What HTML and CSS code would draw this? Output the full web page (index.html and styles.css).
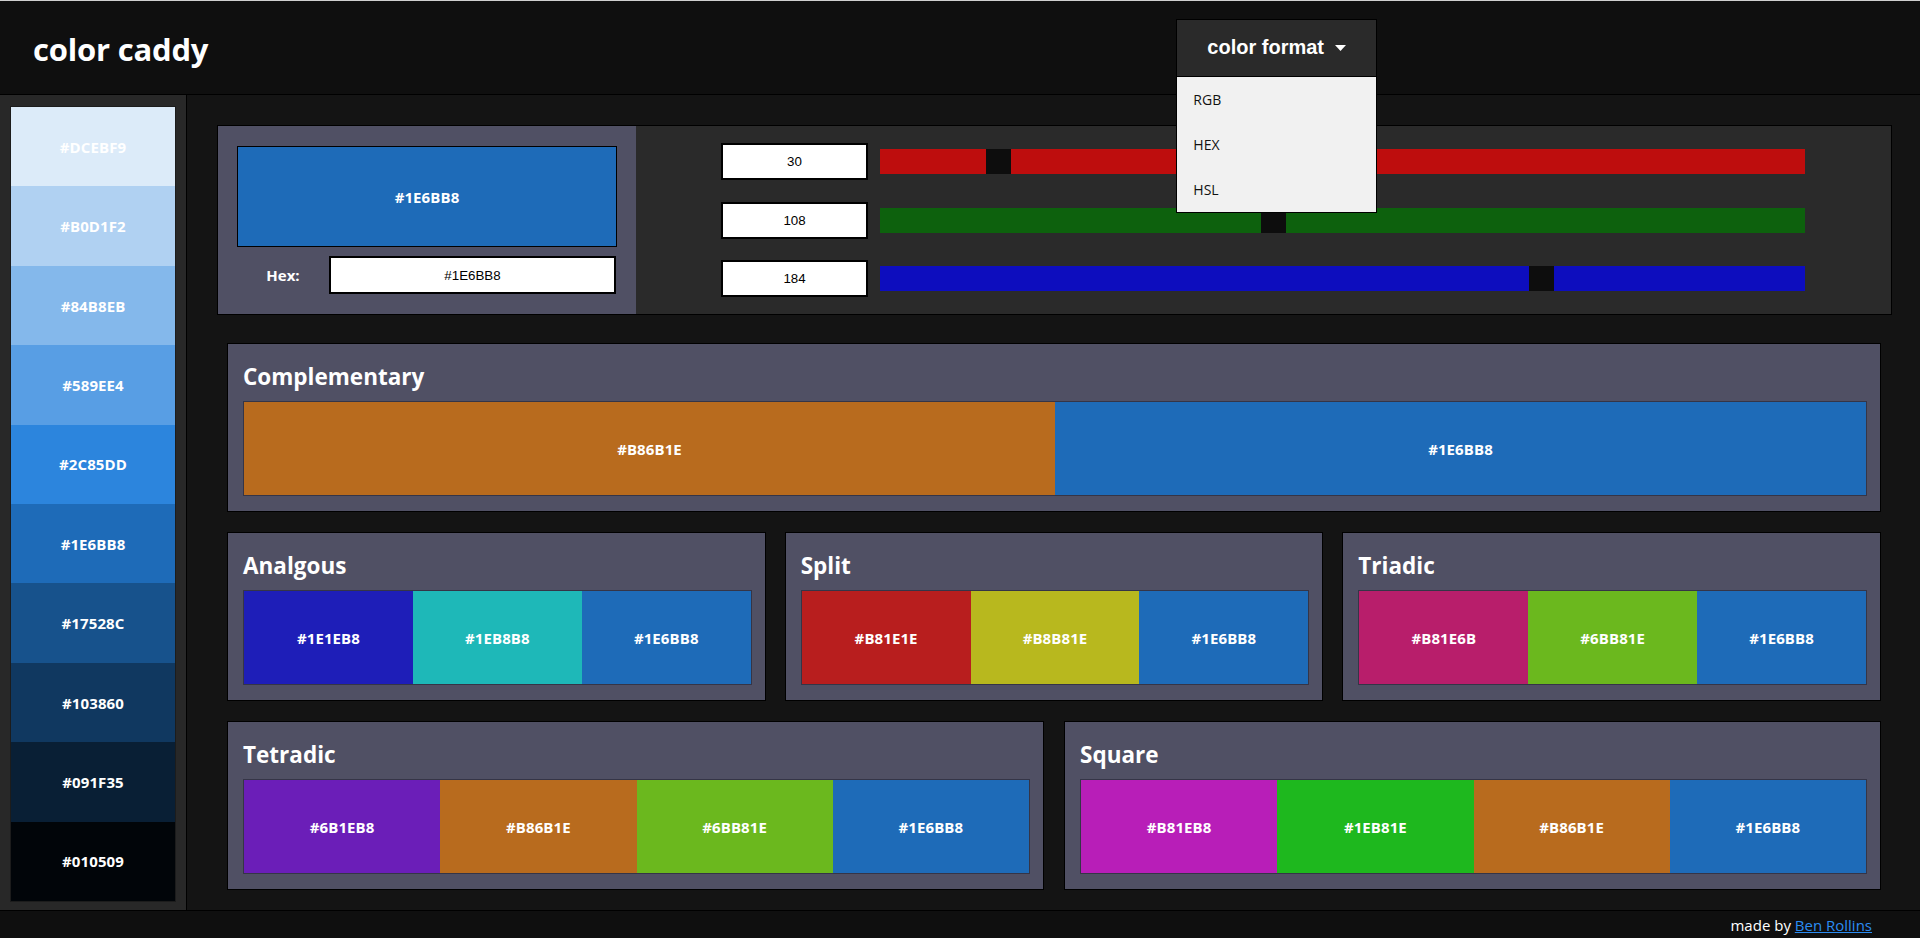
FILE: index.html
```html
<!DOCTYPE html>
<html lang="en">
<head>
<meta charset="utf-8">
<title>color caddy</title>
<link rel="stylesheet" href="styles.css">
</head>
<body>
<div class="app">
  <header class="header">
    <h1 class="logo">color caddy</h1>
    <div class="dropdown">
      <button class="dropdown-btn" type="button">color format
        <svg class="caret" width="11" height="6" viewBox="0 0 11 6"><polygon points="0,0 11,0 5.5,6" fill="#fff"/></svg>
      </button>
      <ul class="dropdown-menu">
        <li class="dropdown-item">RGB</li>
        <li class="dropdown-item">HEX</li>
        <li class="dropdown-item">HSL</li>
      </ul>
    </div>
  </header>

  <div class="body">
    <aside class="sidebar">
      <div class="shades">
        <div class="shade" style="background:#DCEBF9">#DCEBF9</div>
        <div class="shade" style="background:#B0D1F2">#B0D1F2</div>
        <div class="shade" style="background:#84B8EB">#84B8EB</div>
        <div class="shade" style="background:#589EE4">#589EE4</div>
        <div class="shade" style="background:#2C85DD">#2C85DD</div>
        <div class="shade" style="background:#1E6BB8">#1E6BB8</div>
        <div class="shade" style="background:#17528C">#17528C</div>
        <div class="shade" style="background:#103860">#103860</div>
        <div class="shade" style="background:#091F35">#091F35</div>
        <div class="shade" style="background:#010509">#010509</div>
      </div>
    </aside>

    <main class="main">
      <section class="picker">
        <div class="picker-preview">
          <div class="preview-swatch">#1E6BB8</div>
          <div class="hex-row">
            <label class="hex-label" for="hex">Hex:</label>
            <input class="hex-input" id="hex" type="text" value="#1E6BB8">
          </div>
        </div>
        <div class="picker-sliders">
          <div class="slider-row">
            <input class="num" type="text" value="30">
            <input class="range range-red" type="range" min="0" max="255" value="30">
          </div>
          <div class="slider-row">
            <input class="num" type="text" value="108">
            <input class="range range-green" type="range" min="0" max="255" value="108">
          </div>
          <div class="slider-row">
            <input class="num" type="text" value="184">
            <input class="range range-blue" type="range" min="0" max="255" value="184">
          </div>
        </div>
      </section>

      <div class="schemes">
        <section class="box box-comp">
          <h2 class="box-title">Complementary</h2>
          <div class="swatches">
            <div class="sw" style="background:#B86B1E">#B86B1E</div>
            <div class="sw" style="background:#1E6BB8">#1E6BB8</div>
          </div>
        </section>

        <div class="row row-three">
          <section class="box">
            <h2 class="box-title">Analgous</h2>
            <div class="swatches">
              <div class="sw" style="background:#1E1EB8">#1E1EB8</div>
              <div class="sw" style="background:#1EB8B8">#1EB8B8</div>
              <div class="sw" style="background:#1E6BB8">#1E6BB8</div>
            </div>
          </section>
          <section class="box">
            <h2 class="box-title">Split</h2>
            <div class="swatches">
              <div class="sw" style="background:#B81E1E">#B81E1E</div>
              <div class="sw" style="background:#B8B81E">#B8B81E</div>
              <div class="sw" style="background:#1E6BB8">#1E6BB8</div>
            </div>
          </section>
          <section class="box">
            <h2 class="box-title">Triadic</h2>
            <div class="swatches">
              <div class="sw" style="background:#B81E6B">#B81E6B</div>
              <div class="sw" style="background:#6BB81E">#6BB81E</div>
              <div class="sw" style="background:#1E6BB8">#1E6BB8</div>
            </div>
          </section>
        </div>

        <div class="row row-two">
          <section class="box">
            <h2 class="box-title">Tetradic</h2>
            <div class="swatches">
              <div class="sw" style="background:#6B1EB8">#6B1EB8</div>
              <div class="sw" style="background:#B86B1E">#B86B1E</div>
              <div class="sw" style="background:#6BB81E">#6BB81E</div>
              <div class="sw" style="background:#1E6BB8">#1E6BB8</div>
            </div>
          </section>
          <section class="box">
            <h2 class="box-title">Square</h2>
            <div class="swatches">
              <div class="sw" style="background:#B81EB8">#B81EB8</div>
              <div class="sw" style="background:#1EB81E">#1EB81E</div>
              <div class="sw" style="background:#B86B1E">#B86B1E</div>
              <div class="sw" style="background:#1E6BB8">#1E6BB8</div>
            </div>
          </section>
        </div>
      </div>
    </main>
  </div>

  <footer class="footer">
    <span>made by <a class="footer-link" href="#">Ben Rollins</a></span>
  </footer>
</div>
</body>
</html>
```

FILE: styles.css
```css
* {
  box-sizing: border-box;
}

html, body {
  margin: 0;
  padding: 0;
}

body {
  background: #141414;
  color: #fff;
  font-family: "Open Sans", "Noto Sans", sans-serif;
}

.app {
  display: flex;
  flex-direction: column;
  height: 100vh;
  overflow: hidden;
}

/* ---------- header ---------- */
.header {
  flex: none;
  height: 95px;
  display: flex;
  align-items: center;
  padding-left: 33px;
  background: #0f0f0f;
  border-top: 1px solid #cfcfcf;
  border-bottom: 1px solid #000;
  position: relative;
  z-index: 5;
}

.logo {
  margin: 0;
  padding-top: 3px;
  font-size: 31px;
  font-weight: 700;
  letter-spacing: -0.2px;
  color: #fff;
}

.dropdown {
  position: relative;
  margin-left: auto;
  margin-right: 543px;
}

.dropdown-btn {
  display: flex;
  align-items: center;
  gap: 11px;
  height: 58px;
  padding: 0 30px;
  margin: 0;
  white-space: nowrap;
  background: #2a2a2a;
  border: 1px solid #000;
  color: #fff;
  font-family: "Liberation Sans", Arial, sans-serif;
  font-size: 20px;
  font-weight: 700;
}

.caret {
  display: block;
  flex: none;
  margin-top: 1px;
}

.dropdown-menu {
  position: absolute;
  top: 100%;
  left: 0;
  right: 0;
  margin: 0;
  padding: 0;
  list-style: none;
  background: #f1f1f1;
  border: 1px solid #000;
  border-top: 0;
}

.dropdown-item {
  height: 45px;
  line-height: 46px;
  padding-left: 16px;
  color: #111;
  font-size: 14px;
}

/* ---------- body ---------- */
.body {
  flex: 1;
  display: flex;
  min-height: 0;
}

.sidebar {
  flex: none;
  width: 187px;
  display: flex;
  padding: 11px 10px 8px 10px;
  background: #282828;
  border-right: 1px solid #000;
}

.shades {
  flex: 1;
  display: flex;
  flex-direction: column;
  border: 1px solid #1c1c1c;
}

.shade {
  flex: 1;
  display: flex;
  align-items: center;
  justify-content: center;
  font-size: 15px;
  font-weight: 700;
  letter-spacing: 0.1px;
  color: #fff;
}

.main {
  flex: 1;
  padding: 30px 28px 0 30px;
  background: #141414;
}

/* ---------- picker ---------- */
.picker {
  display: flex;
  border: 1px solid #000;
}

.picker-preview {
  flex: none;
  width: 418px;
  padding: 20px 19px 20px 19px;
  background: #505064;
}

.preview-swatch {
  height: 101px;
  display: flex;
  align-items: center;
  justify-content: center;
  background: #1E6BB8;
  border: 1px solid #000;
  font-size: 15px;
  font-weight: 700;
  letter-spacing: 0.1px;
}

.hex-row {
  display: flex;
  align-items: center;
  margin-top: 9px;
}

.hex-label {
  width: 92px;
  text-align: center;
  font-size: 15px;
  font-weight: 700;
}

.hex-input {
  width: 287px;
  height: 38px;
  margin: 0;
  padding: 0;
  border: 2px solid #000;
  background: #fff;
  color: #000;
  text-align: center;
  font-family: "Liberation Sans", Arial, sans-serif;
  font-size: 13.333px;
}

.picker-sliders {
  flex: 1;
  display: flex;
  flex-direction: column;
  gap: 21.5px;
  padding: 17px 86px 0 85px;
  background: #2a2a2a;
}

.slider-row {
  display: flex;
  align-items: center;
}

.num {
  flex: none;
  width: 147px;
  height: 37px;
  margin: 0;
  padding: 0;
  border: 2px solid #000;
  background: #fff;
  color: #000;
  text-align: center;
  font-family: "Liberation Sans", Arial, sans-serif;
  font-size: 13.333px;
}

.range {
  -webkit-appearance: none;
  appearance: none;
  flex: 1;
  height: 25px;
  margin: 0 0 0 12px;
  padding: 0;
  border: 0;
  outline: none;
}

.range::-webkit-slider-runnable-track {
  height: 25px;
  background: transparent;
  border: 0;
}

.range::-webkit-slider-thumb {
  -webkit-appearance: none;
  appearance: none;
  width: 25px;
  height: 25px;
  background: #0d0d0d;
  border: 0;
  border-radius: 0;
}

.range-red { background: #be0d0d; }
.range-green { background: #0d610d; }
.range-blue { background: #0d0dbe; }

/* ---------- schemes ---------- */
.schemes {
  margin: 28px 11px 0 10px;
}

.row {
  display: grid;
  margin-top: 20px;
}

.row-three {
  grid-template-columns: repeat(3, 1fr);
  gap: 19px;
}

.row-two {
  grid-template-columns: repeat(2, 1fr);
  gap: 20px;
}

.box {
  background: #505064;
  border: 1px solid #000;
  padding: 15px;
}

.box-title {
  margin: 0 0 9px 0;
  padding-top: 3px;
  font-size: 22.5px;
  line-height: 30px;
  font-weight: 700;
  color: #fff;
}

.swatches {
  box-sizing: content-box;
  display: flex;
  width: 100%;
  height: 93px;
  border: 1px solid #353547;
}

.sw {
  flex: 1;
  display: flex;
  align-items: center;
  justify-content: center;
  font-size: 15px;
  font-weight: 700;
  letter-spacing: 0.1px;
  color: #fff;
}

/* ---------- footer ---------- */
.footer {
  flex: none;
  height: 28px;
  display: flex;
  align-items: center;
  justify-content: flex-end;
  padding-right: 48px;
  background: #0f0f0f;
  border-top: 1px solid #000;
  font-size: 15px;
  color: #fff;
}

.footer-link {
  color: #2b8cf2;
  text-decoration: underline;
}
```
